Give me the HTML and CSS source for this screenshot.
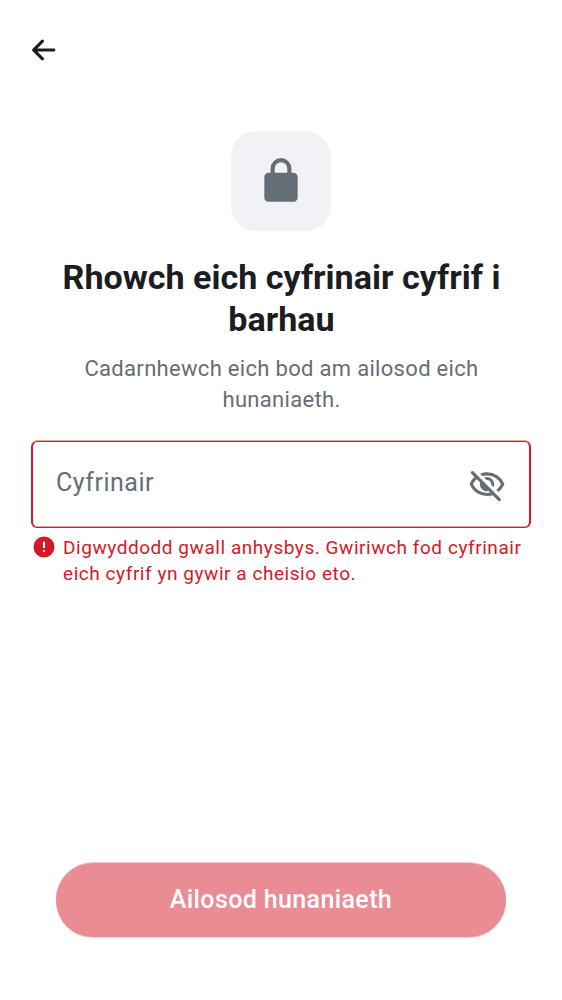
FILE: index.html
```html
<!DOCTYPE html>
<html lang="cy">
<head>
<meta charset="utf-8">
<title>Ailosod hunaniaeth</title>
<link rel="stylesheet" href="styles.css">
</head>
<body>
<main class="screen">
  <header class="topbar">
    <svg class="back" viewBox="0 0 24 24"><path d="m10.95 18.3-5.600-5.600a.9.900 0 0 1-.213-.325A1.100 1.100 0 0 1 5.075 12q0-.2.062-.375a.9.900 0 0 1 .213-.325l5.600-5.600a.95.950 0 0 1 .687-.287q.413 0 .713.287.3.300.3.713t-.3.712L8.450 11H18.800q.424 0 .712.287.288.288.288.713 0 .424-.288.713A.970.970 0 0 1 18.800 13H8.450l3.900 3.900q.275.275.287.688a.930.930 0 0 1-.287.712.950.950 0 0 1-.7.300.950.950 0 0 1-.7-.3"/></svg>
  </header>
  <section class="hero">
    <div class="tile">
      <svg class="lock" viewBox="0 0 24 24"><path d="M6 22q-.824 0-1.412-.587A1.930 1.930 0 0 1 4 20V10q0-.825.588-1.412A1.930 1.930 0 0 1 6 8h1V6q0-2.075 1.463-3.537Q9.925 1 12 1t3.537 1.463T17 6v2h1q.824 0 1.413.588Q20 9.175 20 10v10q0 .824-.587 1.413A1.930 1.930 0 0 1 18 22zM9 8h6V6q0-1.250-.875-2.125A2.900 2.900 0 0 0 12 3q-1.250 0-2.125.875A2.900 2.900 0 0 0 9 6z"/></svg>
    </div>
    <h1 class="title">Rhowch eich cyfrinair cyfrif i<br>barhau</h1>
    <p class="subtitle">Cadarnhewch eich bod am ailosod eich<br>hunaniaeth.</p>
  </section>
  <div class="field">
    <span class="placeholder">Cyfrinair</span>
    <svg class="eye" viewBox="0 0 24 24"><path d="m16.100 13.300-1.450-1.450q.225-1.175-.675-2.200t-2.325-.8L10.200 7.400q.424-.2.863-.3A4.200 4.200 0 0 1 12 7q1.875 0 3.188 1.313Q16.500 9.625 16.500 11.500q0 .5-.1.938t-.3.862m3.200 3.150-1.450-1.400a11 11 0 0 0 1.688-1.588A9 9 0 0 0 20.800 11.500q-1.250-2.524-3.588-4.013Q14.875 6 12 6q-.724 0-1.425.1a10 10 0 0 0-1.375.3L7.650 4.850A11.100 11.100 0 0 1 12 4q3.575 0 6.425 1.887T22.700 10.800q.125.200.162.363t.038.337a1.500 1.500 0 0 1-.15.700 10.900 10.900 0 0 1-3.450 4.250m-.2 5.450-3.500-3.450q-.874.274-1.762.413Q12.950 19 12 19q-3.575 0-6.425-1.887T1.300 12.200a1.300 1.300 0 0 1-.15-.350 1.500 1.500 0 0 1 0-.7q.05-.175.150-.350A11.600 11.600 0 0 1 4.150 7L2.075 4.900A.93.930 0 0 1 1.800 4.213a.950.950 0 0 1 .3-.713.950.950 0 0 1 1.400 0l17 17q.275.274.288.688a.930.930 0 0 1-.288.712.950.950 0 0 1-1.400 0M5.550 8.400q-.725.650-1.325 1.425A9 9 0 0 0 3.200 11.500q1.250 2.524 3.587 4.012T12 17q.5 0 .975-.062.475-.063.975-.138l-.9-.950q-.274.075-.525.113T12 16q-1.875 0-3.188-1.312Q7.500 13.375 7.500 11.500q0-.274.037-.525.038-.250.113-.525z"/></svg>
  </div>
  <div class="error">
    <svg class="alert" viewBox="0 0 22 22"><circle cx="11" cy="11" r="10.500" fill="#d51928"/><path d="M11 6.600v4.600M11 14.900v.2" stroke="#fff" stroke-width="2" stroke-linecap="round"/></svg>
    <p class="message">Digwyddodd gwall anhysbys. Gwiriwch fod cyfrinair<br>eich cyfrif yn gywir a cheisio eto.</p>
  </div>
  <button class="submit" disabled>Ailosod hunaniaeth</button>
</main>
</body>
</html>
```
FILE: styles.css
```css
* { box-sizing: border-box; }
body {
  margin: 0;
  background: #fff;
  color: #1b1d22;
  font-family: Roboto, sans-serif;
}
.screen {
  display: flex;
  flex-direction: column;
  height: 1000px;
  padding: 0 31px 63px;
}
.topbar { height: 131px; padding-top: 31px; }
.back { display: block; width: 38px; height: 38px; margin-left: -7px; fill: #1b1d22; }
.hero { display: flex; flex-direction: column; align-items: center; text-align: center; }
.tile {
  display: grid;
  place-items: center;
  width: 100px;
  height: 100px;
  border-radius: 25px;
  background: #f0f2f5;
}
.lock { width: 50px; height: 50px; fill: #656d77; }
.title {
  margin: 25px 0 0;
  padding-left: 1px;
  font-size: 34.1px;
  font-weight: 700;
  line-height: 42px;
  white-space: nowrap;
}
.subtitle {
  margin: 13px 0 0;
  padding-left: 1px;
  color: #656d77;
  font-size: 22px;
  line-height: 31px;
  letter-spacing: .31px;
  white-space: nowrap;
}
.field {
  display: flex;
  align-items: center;
  justify-content: space-between;
  height: 87px;
  margin-top: 26px;
  padding: 0 23px;
  border: 2px solid #d51928;
  border-width: 1px 2px;
  border-radius: 6px;
  box-shadow: 0 -1px 0 #d5192866, inset 0 -1px 0 #d5192866;
}
.placeholder { color: #656d77; font-size: 25px; letter-spacing: .5px; padding-bottom: 4px; }
.eye { width: 38px; height: 38px; fill: #656d77; }
.error { display: flex; margin-top: 7px; gap: 8px; padding-left: 2px; color: #d51928; }
.alert { width: 22px; height: 22px; margin: 1px .5px 0 -.5px; flex: none; }
.message { margin: 0; font-size: 19px; line-height: 26px; letter-spacing: .55px; white-space: nowrap; }
.submit {
  height: 74px;
  margin: auto 25px 0;
  padding: 0 0 1px;
  border: 0;
  border-radius: 37px;
  background: #ea8c94;
  box-shadow: 0 -1px 0 #ea8c9480, 0 1px 0 #ea8c9480;
  color: #fff;
  font: 500 25px Roboto, sans-serif;
  letter-spacing: .38px;
}
```
